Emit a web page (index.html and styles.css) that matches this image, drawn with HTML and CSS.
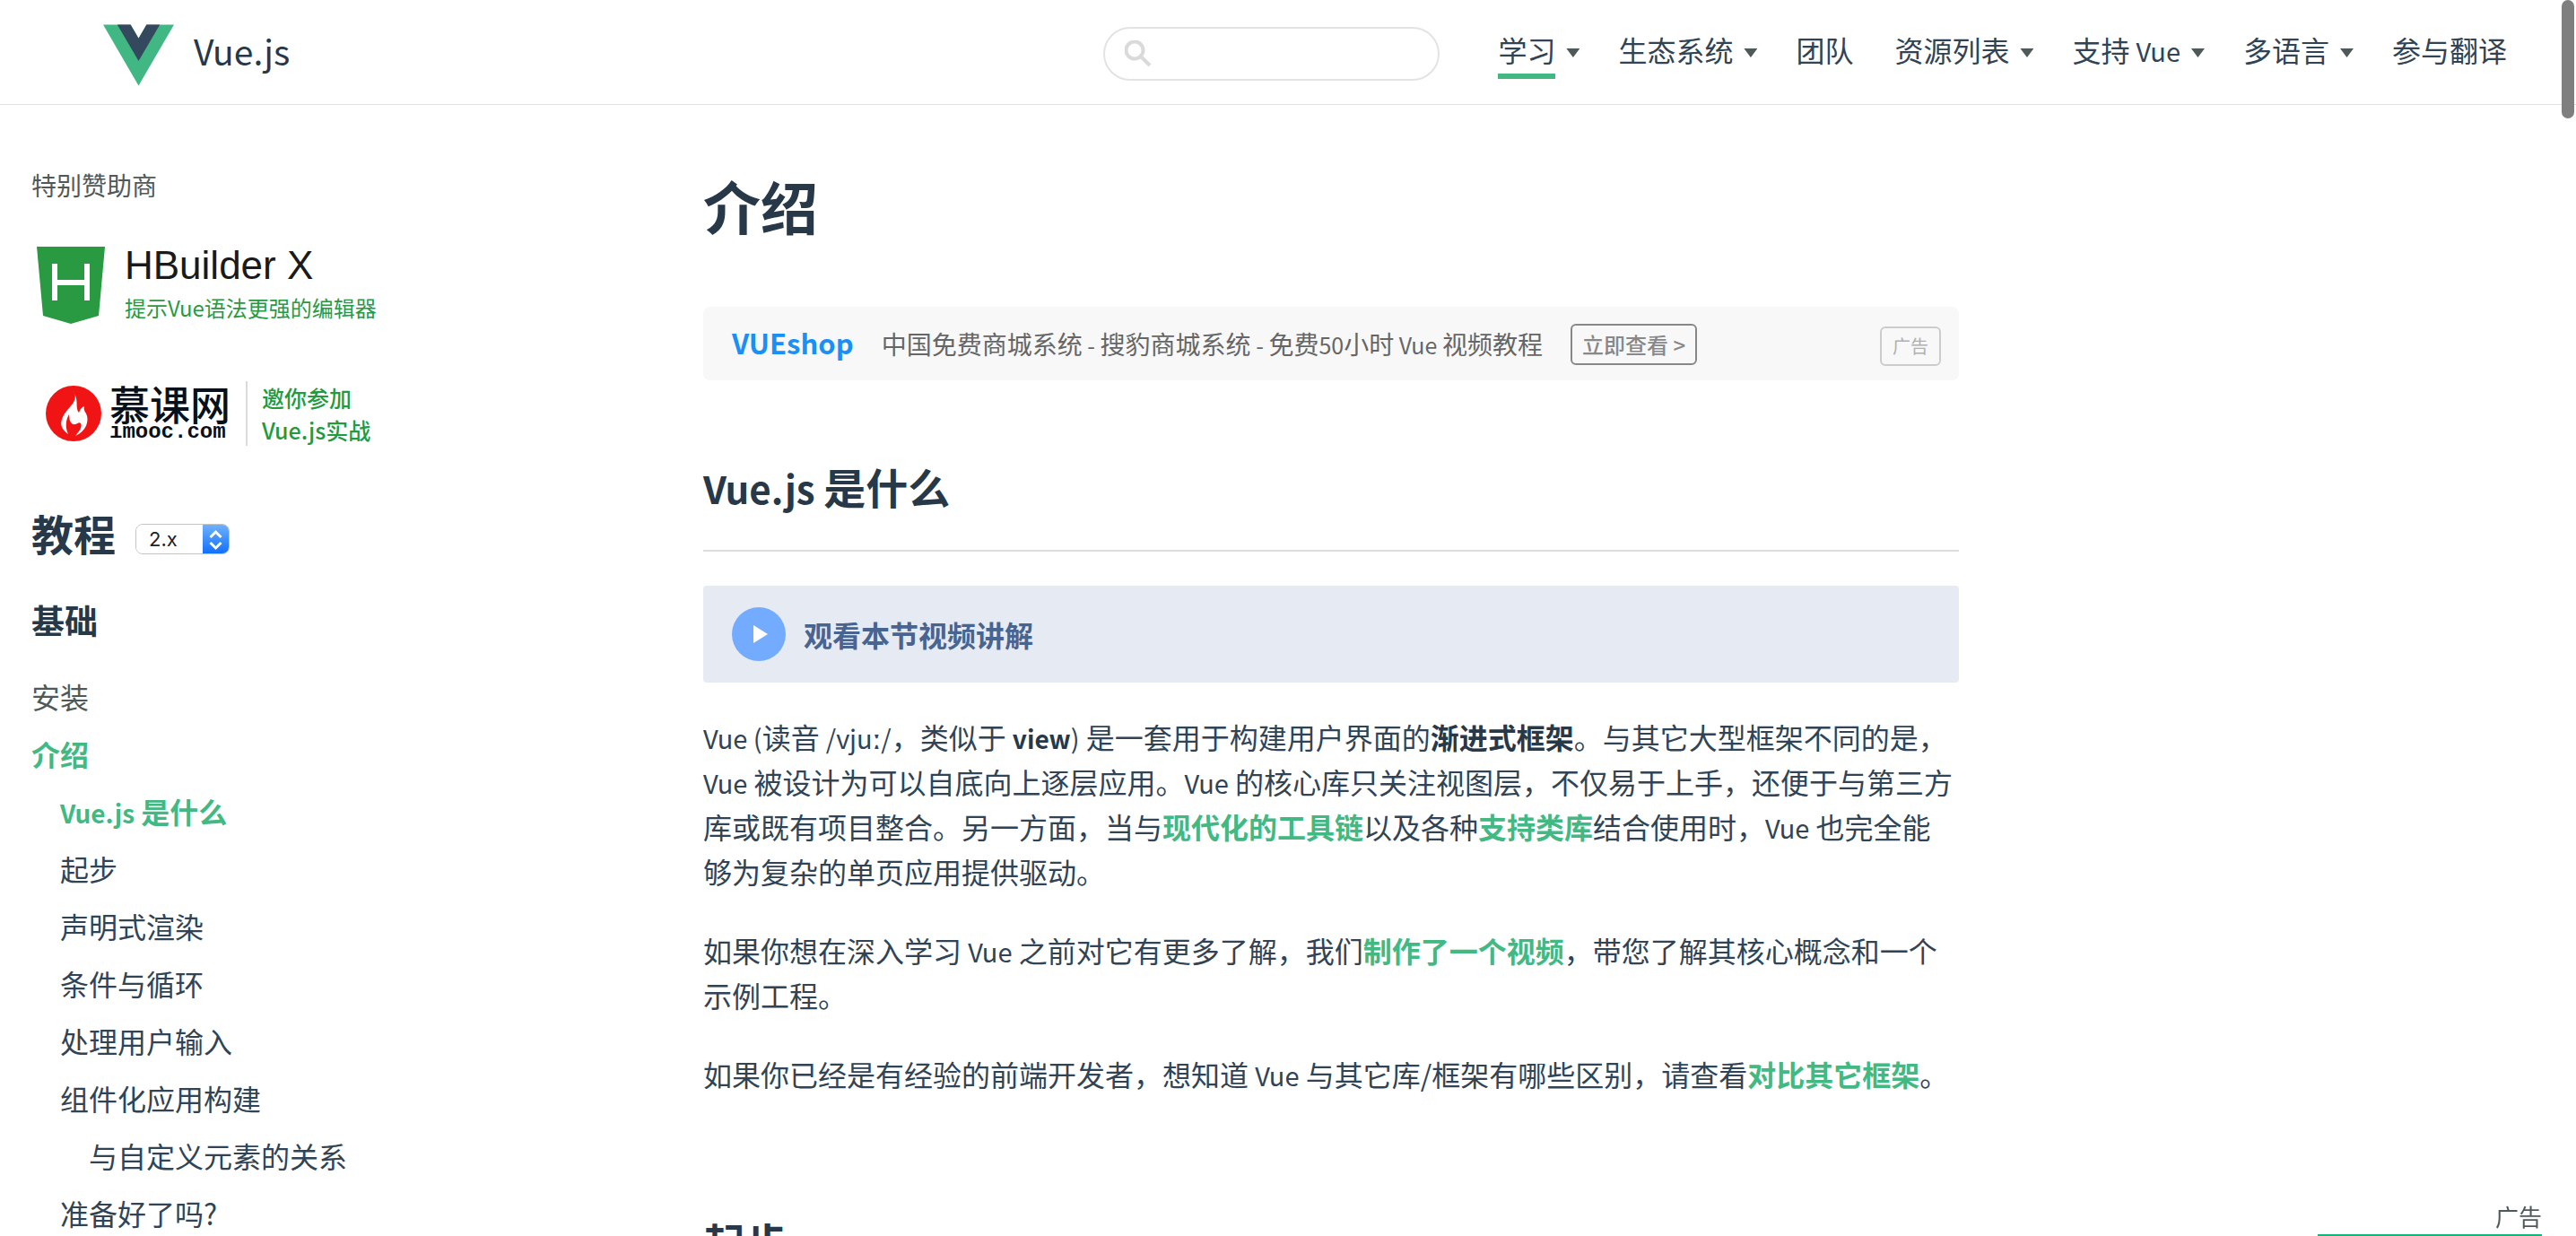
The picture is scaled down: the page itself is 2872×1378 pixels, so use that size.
FILE: index.html
```html
<!DOCTYPE html>
<html lang="zh-CN">
<head>
<meta charset="utf-8">
<title>介绍 — Vue.js</title>
<link rel="stylesheet" href="styles.css">
</head>
<body>
<header class="header">
  <a class="logo" href="#">
    <svg class="logo-mark" viewBox="0 0 80 69" aria-hidden="true"><path fill="#41b883" d="M0 0h31l9 15.500L49 0h31L40 69z"/><path fill="#34495e" d="M16 0h15l9 15.500L49 0h15L40 41z"/></svg>
    <span>Vue.js</span>
  </a>
  <nav class="nav">
    <label class="search">
      <svg viewBox="0 0 30 30" aria-hidden="true"><circle cx="11" cy="11" r="9.500"/><path d="M18 18l10 10"/></svg>
      <input type="search" aria-label="搜索">
    </label>
    <a class="nav-link caret current" href="#"><span>学习</span></a>
    <a class="nav-link caret" href="#"><span>生态系统</span></a>
    <a class="nav-link plain" href="#"><span>团队</span></a>
    <a class="nav-link caret" href="#"><span>资源列表</span></a>
    <a class="nav-link caret" href="#"><span>支持 <span class="latin">Vue</span></span></a>
    <a class="nav-link caret" href="#"><span>多语言</span></a>
    <a class="nav-link" href="#"><span>参与翻译</span></a>
  </nav>
</header>
<div class="page">
  <aside class="sidebar">
    <p class="sponsor-title">特别赞助商</p>
    <a class="sponsor hbuilder" href="#">
      <svg class="shield" viewBox="0 0 76 86" aria-hidden="true"><path fill="#299a42" d="M0 0h76l-7 77-31 9-31-9z"/><path fill="none" stroke="#fff" stroke-width="6" d="M20 19v41M56 19v41M20 40h36"/></svg>
      <span class="hbuilder-text"><span class="hbuilder-name">HBuilder X</span><span class="hbuilder-tag">提示Vue语法更强的编辑器</span></span>
    </a>
    <a class="sponsor imooc" href="#">
      <svg class="flame" viewBox="0 0 62 62" aria-hidden="true"><circle cx="31" cy="31" r="31" fill="#f01414"/><path fill="#fff" d="M30 5c9 12-6 19-11 30-4 8-1 14 6 19-4-9-2-17 1-22 0 8 3 12 7 11 3-1 4-3 6-1 2 4-1 8-6 14 12-5 16-17 12-25-2-3-3-5-2-8-4 1-5 5-6 7C32 23 38 17 30 5z"/></svg>
      <span class="imooc-name"><span class="imooc-cn">慕课网</span><span class="imooc-en">imooc.com</span></span>
      <span class="imooc-text">邀你参加<br>Vue.js实战</span>
    </a>
    <div class="guide-head">
      <h2>教程</h2>
      <span class="version"><select aria-label="版本"><option>2.x</option></select><svg viewBox="0 0 28 34" aria-hidden="true"><path d="M8 14l6-6 6 6M8 20l6 6 6-6"/></svg></span>
    </div>
    <h3>基础</h3>
    <ul class="menu">
      <li><a href="#">安装</a></li>
      <li><a class="active" href="#">介绍</a>
        <ul class="sub">
          <li><a class="active" href="#"><span class="latin">Vue.js</span> 是什么</a></li>
          <li><a href="#">起步</a></li>
          <li><a href="#">声明式渲染</a></li>
          <li><a href="#">条件与循环</a></li>
          <li><a href="#">处理用户输入</a></li>
          <li><a href="#">组件化应用构建</a>
            <ul class="sub"><li><a href="#">与自定义元素的关系</a></li></ul></li>
          <li><a href="#">准备好了吗?</a></li>
        </ul></li>
    </ul>
  </aside>
  <main class="content">
    <h1>介绍</h1>
    <div class="ad">
      <a class="ad-brand" href="#">VUEshop</a>
      <span class="ad-text">中国免费商城系统<span class="latin"> - </span>搜豹商城系统<span class="latin"> - </span>免费<span class="latin">50</span>小时<span class="latin"> Vue </span>视频教程</span>
      <button class="ad-button" type="button">立即查看 &gt;</button>
      <span class="ad-mark">广告</span>
    </div>
    <h2 class="section-title"><span class="latin">Vue.js </span>是什么</h2>
    <a class="video" href="#">
      <svg viewBox="0 0 60 60" aria-hidden="true"><circle cx="30" cy="30" r="30" fill="#73abff"/><path fill="#fff" d="M24 20l16 10-16 10z"/></svg>
      <span>观看本节视频讲解</span>
    </a>
    <p><span class="latin">Vue (</span>读音 <span class="latin">/vju<b>ː</b>/</span>，类似于 <strong class="latin">view</strong><span class="latin">)</span> 是一套用于构建用户界面的<strong>渐进式框架</strong>。与其它大型框架不同的是，<span class="latin">Vue</span> 被设计为可以自底向上逐层应用。<span class="latin">Vue</span> 的核心库只关注视图层，不仅易于上手，还便于与第三方库或既有项目整合。另一方面，当与<a href="#">现代化的工具链</a>以及各种<a href="#">支持类库</a>结合使用时，<span class="latin">Vue</span> 也完全能够为复杂的单页应用提供驱动。</p>
    <p>如果你想在深入学习 <span class="latin">Vue</span> 之前对它有更多了解，我们<a href="#">制作了一个视频</a>，带您了解其核心概念和一个示例工程。</p>
    <p>如果你已经是有经验的前端开发者，想知道 <span class="latin">Vue</span> 与其它库/框架有哪些区别，请查看<a href="#">对比其它框架</a>。</p>
    <h2 class="section-title next">起步</h2>
  </main>
</div>
<div class="corner-ad"><span>广告</span></div>
<div class="scroll-thumb"></div>
</body>
</html>
```
FILE: styles.css
```css
* { box-sizing: border-box; }
html { height: 100%; overflow: hidden; }
body {
  height: 100%;
  margin: 0;
  overflow: hidden;
  background: #fff;
  color: #304455;
  font: 32px/50px "Noto Sans CJK SC", sans-serif;
}
a { color: inherit; text-decoration: none; }
h1, h2, h3, p, ul { margin: 0; padding: 0; }
ul { list-style: none; }
.latin { font-size: 29px; line-height: 1; }
strong.latin, .active .latin { font-size: 28px; }

.header {
  display: flex;
  justify-content: space-between;
  height: 117px;
  padding: 0 77px 0 115px;
  border-bottom: 1px solid #e2e2e2;
}
.logo {
  display: flex;
  gap: 22px;
  padding-top: 27px;
  color: #273849;
  font-size: 39px;
  line-height: 58px;
}
.logo-mark { width: 79px; height: 69px; }
.nav { display: flex; gap: 43px; padding-top: 30px; }
.search {
  display: flex;
  align-items: center;
  gap: 10px;
  width: 375px;
  height: 60px;
  margin-right: 22px;
  padding: 0 22px;
  border: 2px solid #e3e3e3;
  border-radius: 30px;
}
.search svg { width: 30px; height: 30px; fill: none; stroke: #dadada; stroke-width: 4; }
.search input { width: 280px; border: 0; outline: 0; background: none; font: inherit; }
.nav-link { display: flex; gap: 12px; height: 58px; }
.nav-link.plain { margin-right: 3px; }
.nav-link.current > span { border-bottom: 6px solid #42b983; }
.caret::after {
  content: "";
  margin-top: 24px;
  width: 15px;
  height: 10px;
  background: #4f5959;
  clip-path: polygon(0 0, 100% 0, 50% 100%);
}

.page { display: flex; }
.sidebar { width: 784px; padding: 64px 0 0 35px; }
.sponsor-title { color: #4f5959; font-size: 28px; }
.sponsor { display: flex; }
.hbuilder { gap: 22px; margin-top: 44px; padding-left: 6px; }
.shield { width: 76px; height: 86px; }
.hbuilder-text { display: flex; flex-direction: column; }
.hbuilder-name { color: #1a1a1a; font: 44px/42px "Liberation Sans", sans-serif; }
.hbuilder-tag { color: #299a42; font-size: 24px; line-height: 52px; }
.imooc { align-items: center; margin-top: 56px; padding-left: 16px; }
.flame { width: 62px; height: 62px; }
.imooc-name { display: flex; flex-direction: column; gap: 2px; width: 138px; margin-left: 9px; color: #07111b; white-space: nowrap; }
.imooc-cn { font-size: 45px; line-height: 40px; font-weight: 500; }
.imooc-en { font: bold 24px/20px "Liberation Mono", monospace; }
.imooc-text {
  margin-left: 14px;
  padding-left: 16px;
  border-left: 2px solid #d8dadc;
  color: #229a3e;
  font-size: 25px;
  line-height: 36px;
  font-weight: 500;
}
.guide-head { display: flex; align-items: center; gap: 22px; margin-top: 62px; color: #273849; }
.guide-head h2 { font-size: 47px; line-height: 70px; }
.version { display: flex; width: 105px; height: 34px; margin-top: 14px; border: 1px solid #c4c4c4; border-radius: 8px; overflow: hidden; }
.version select {
  flex: 1;
  min-width: 0;
  padding: 0 0 0 14px;
  border: 0;
  appearance: none;
  background: #fff;
  color: #222;
  font: 22px/32px Inter, sans-serif;
}
.version svg { width: 29px; height: 34px; background: linear-gradient(#6fb0fb, #0a6cff); fill: none; stroke: #fff; stroke-width: 3; }
.sidebar h3 { margin-top: 34px; color: #273849; font-size: 37px; line-height: 56px; }
.menu { margin-top: 25px; line-height: 64px; }
.menu > li > a { color: #4f5959; }
.menu .sub { padding-left: 32px; }
.menu .active, .menu > li > .active, .content p a { color: #42b983; font-weight: 600; }

.content { width: 1400px; padding-top: 67px; }
.content h1 { color: #273849; font-size: 64px; line-height: 88px; }
.ad {
  display: flex;
  align-items: center;
  height: 82px;
  margin-top: 70px;
  padding: 0 20px 0 32px;
  border-radius: 8px;
  background: #f8f8f8;
}
.ad-brand { padding-bottom: 3px; color: #1890f5; font-size: 31px; font-weight: 600; }
.ad-text { margin-left: 31px; color: #666; font-size: 28px; }
.ad-text .latin { font-size: 25px; }
.ad-button { height: 46px; margin: 2px 0 0 31px; padding: 0 11px; border: 2px solid #888; border-radius: 6px; background: none; color: #888; font: 500 24px/40px "Noto Sans CJK SC", sans-serif; }
.ad-mark { margin: 6px 0 0 auto; padding: 0 12px; border: 2px solid #ccc; border-radius: 6px; color: #b0b0b0; font-size: 20px; line-height: 40px; }
.section-title { margin-top: 80px; padding-bottom: 33px; border-bottom: 2px solid #ddd; color: #273849; font-size: 47px; line-height: 76px; }
.section-title .latin { font-size: 42px; }
.video {
  display: flex;
  align-items: center;
  gap: 20px;
  height: 108px;
  margin: 38px 0 35px;
  padding-left: 32px;
  border-radius: 4px;
  background: #e6ebf3;
  color: #486491;
  font-weight: 600;
}
.video svg { width: 60px; height: 60px; }
.content p { margin-bottom: 38px; }
.content strong { color: #273849; }
.content .next { margin-top: 124px; }

.corner-ad {
  position: fixed;
  right: 38px;
  bottom: 0;
  width: 250px;
  border-bottom: 2px solid #14b57a;
  color: #4f5959;
  font-size: 26px;
  line-height: 40px;
  text-align: right;
}
.scroll-thumb { position: fixed; top: 0; right: 2px; width: 14px; height: 132px; border-radius: 7px; background: #7f7f7f; }
```
